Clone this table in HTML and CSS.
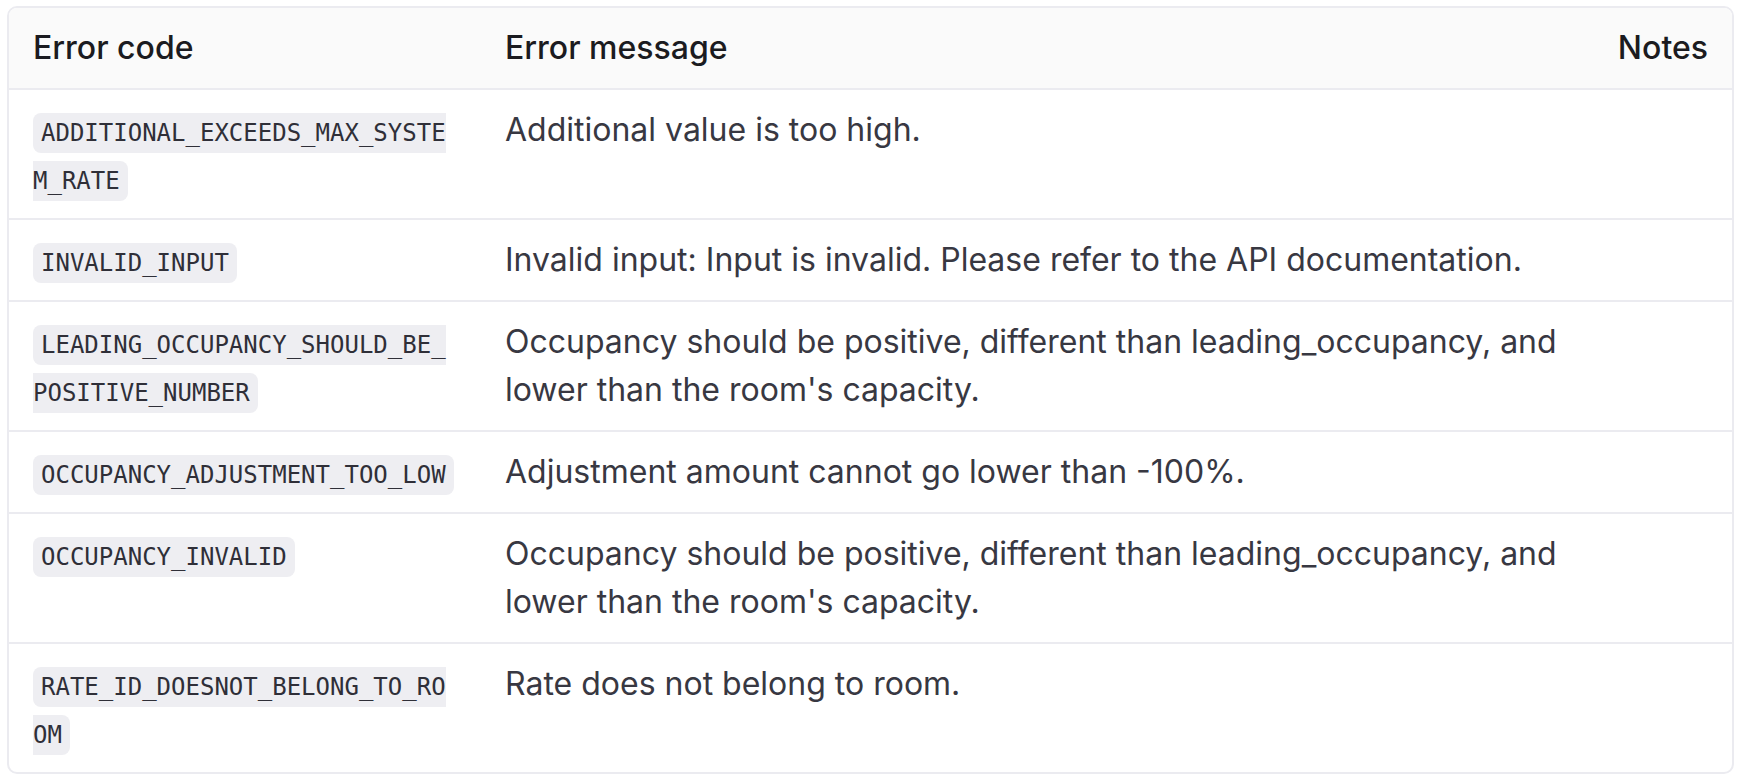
FILE: index.html
```html
<!DOCTYPE html>
<html lang="en">
<head>
<meta charset="utf-8">
<title>Error codes</title>
<link rel="stylesheet" href="styles.css">
</head>
<body>
<div class="table-wrap">
  <table class="errors">
    <thead>
      <tr>
        <th class="col-code">Error code</th>
        <th class="col-msg">Error message</th>
        <th class="col-notes">Notes</th>
      </tr>
    </thead>
    <tbody>
      <tr>
        <td class="col-code"><code>ADDITIONAL_EXCEEDS_MAX_SYSTEM_RATE</code></td>
        <td class="col-msg">Additional value is too high.</td>
        <td class="col-notes"></td>
      </tr>
      <tr>
        <td class="col-code"><code>INVALID_INPUT</code></td>
        <td class="col-msg">Invalid input: Input is invalid. Please refer to the API documentation.</td>
        <td class="col-notes"></td>
      </tr>
      <tr>
        <td class="col-code"><code>LEADING_OCCUPANCY_SHOULD_BE_POSITIVE_NUMBER</code></td>
        <td class="col-msg">Occupancy should be positive, different than leading_occupancy, and lower than the room's capacity.</td>
        <td class="col-notes"></td>
      </tr>
      <tr>
        <td class="col-code"><code>OCCUPANCY_ADJUSTMENT_TOO_LOW</code></td>
        <td class="col-msg">Adjustment amount cannot go lower than -100%.</td>
        <td class="col-notes"></td>
      </tr>
      <tr>
        <td class="col-code"><code>OCCUPANCY_INVALID</code></td>
        <td class="col-msg">Occupancy should be positive, different than leading_occupancy, and lower than the room's capacity.</td>
        <td class="col-notes"></td>
      </tr>
      <tr>
        <td class="col-code"><code>RATE_ID_DOESNOT_BELONG_TO_ROOM</code></td>
        <td class="col-msg">Rate does not belong to room.</td>
        <td class="col-notes"></td>
      </tr>
    </tbody>
  </table>
</div>
</body>
</html>
```

FILE: styles.css
```css
html, body {
  margin: 0;
  padding: 0;
  background: #ffffff;
}

body {
  padding: 6px 12px 0 7px;
  font-family: Inter, "Noto Sans", "Liberation Sans", sans-serif;
  font-size: 32px;
  line-height: 48px;
  color: #383842;
}

.table-wrap {
  border: 2px solid #ebebf0;
  border-radius: 10px;
  overflow: hidden;
}

.errors {
  width: 100%;
  border-collapse: separate;
  border-spacing: 0;
  table-layout: auto;
}

.errors th,
.errors td {
  padding: 16px 24px;
  text-align: left;
  vertical-align: top;
  border-bottom: 2px solid #ebebf0;
}

.errors tbody tr:last-child td {
  border-bottom: none;
}

.errors th {
  background: #fafafa;
  font-weight: 500;
  color: #1b1b20;
}

.col-code {
  width: 424px;
  min-width: 424px;
  max-width: 424px;
}

.col-code code {
  word-break: break-all;
}

.errors th.col-notes,
.errors td.col-notes {
  width: 1px;
  white-space: nowrap;
  text-align: right;
}

code {
  font-family: "DejaVu Sans Mono", "Liberation Mono", monospace;
  font-size: 24px;
  line-height: 24px;
  color: #2f2f38;
  background: #eeeef2;
  padding: 6px 8px;
  border-radius: 8px;
}
```
